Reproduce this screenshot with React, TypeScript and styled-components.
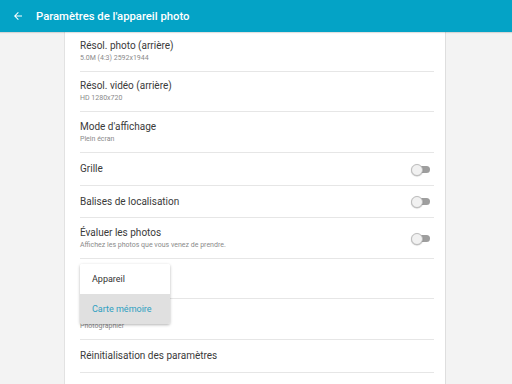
import React from "react";
import styled, { createGlobalStyle } from "styled-components";

const GlobalStyle = createGlobalStyle`
  html, body {
    margin: 0;
    padding: 0;
    background: #f3f3f3;
    font-family: Roboto, "Noto Sans", sans-serif;
  }
`;

const Page = styled.div`
  width: 512px;
  height: 384px;
  display: flex;
  flex-direction: column;
  overflow: hidden;
`;

const TopBar = styled.div`
  height: 32px;
  flex: none;
  background: #04a3c6;
  display: flex;
  align-items: center;
  color: #fff;
  box-shadow: 0 1px 1px rgba(0, 0, 0, 0.12);
  position: relative;
  z-index: 1;
`;

const BackButton = styled.div`
  width: 36px;
  display: flex;
  justify-content: center;
  align-items: center;
`;

const Title = styled.div`
  font-size: 11.3px;
  font-weight: 500;
`;

const Body = styled.div`
  flex: 1;
  display: flex;
`;

const Side = styled.div`
  width: 64px;
  flex: none;
`;

const Column = styled.div`
  width: 382px;
  flex: none;
  background: #fff;
  border-left: 1px solid #e2e2e2;
  border-right: 1px solid #dedede;
  padding: 0 11px 0 15px;
  box-sizing: border-box;
  position: relative;
`;

const Row = styled.div<{ h: number }>`
  height: ${(p) => p.h}px;
  box-sizing: border-box;
  border-bottom: 1px solid #e6e6e6;
  display: flex;
  align-items: center;
  justify-content: space-between;
  padding-right: 4px;
`;

const Texts = styled.div`
  display: flex;
  flex-direction: column;
  gap: 2px;
`;

const Label = styled.div`
  font-size: 10px;
  color: #3a3a3a;
  line-height: 12px;
  min-height: 12px;
`;

const Sub = styled.div`
  font-size: 7px;
  color: #8a8a8a;
  line-height: 9px;
`;

const Track = styled.div`
  width: 19px;
  height: 11px;
  position: relative;
  display: flex;
  align-items: center;
`;

const TrackBar = styled.div`
  margin-left: 3px;
  width: 16px;
  height: 7px;
  border-radius: 4px;
  background: #9e9e9e;
`;

const Thumb = styled.div`
  position: absolute;
  left: 0;
  top: 0;
  width: 10px;
  height: 10px;
  border-radius: 50%;
  background: #f1f1f1;
  border: 0.5px solid #bdbdbd;
  box-shadow: 0 0.5px 1px rgba(0, 0, 0, 0.25);
`;

const Menu = styled.div`
  position: absolute;
  left: 15px;
  top: 232px;
  width: 90px;
  background: #fff;
  box-shadow: 0 1px 3px rgba(0, 0, 0, 0.3);
  border-radius: 2px;
  overflow: hidden;
`;

const MenuItem = styled.div<{ active?: boolean }>`
  height: 30px;
  display: flex;
  align-items: center;
  padding-left: 12px;
  font-size: 9px;
  color: ${(p) => (p.active ? "#2e9fc0" : "#333")};
  background: ${(p) => (p.active ? "#e0e0e0" : "#fff")};
`;

const Switch = () => (
  <Track>
    <TrackBar />
    <Thumb />
  </Track>
);

type Item = { title: string; sub?: string; h: number; toggle?: boolean };

// rows 7 and 8 have their titles hidden behind the open menu
const items: Item[] = [
  { title: "Résol. photo (arrière)", sub: "5.0M (4:3) 2592x1944", h: 40 },
  { title: "Résol. vidéo (arrière)", sub: "HD 1280x720", h: 40 },
  { title: "Mode d'affichage", sub: "Plein écran", h: 41 },
  { title: "Grille", h: 33, toggle: true },
  { title: "Balises de localisation", h: 32, toggle: true },
  {
    title: "Évaluer les photos",
    sub: "Affichez les photos que vous venez de prendre.",
    h: 41,
    toggle: true,
  },
  { title: "", h: 40 },
  { title: "", sub: "Photographier", h: 41 },
  { title: "Réinitialisation des paramètres", h: 33 },
];

export default function App() {
  return (
    <Page>
      <GlobalStyle />
      <TopBar>
        <BackButton>
          <svg width="12" height="12" viewBox="0 0 24 24">
            <path
              d="M20 11H7.83l5.59-5.59L12 4l-8 8 8 8 1.41-1.41L7.83 13H20v-2z"
              fill="#fff"
            />
          </svg>
        </BackButton>
        <Title>Paramètres de l'appareil photo</Title>
      </TopBar>
      <Body>
        <Side />
        <Column>
          {items.map((it, i) => (
            <Row key={i} h={it.h}>
              <Texts>
                <Label>{it.title}</Label>
                {it.sub && <Sub>{it.sub}</Sub>}
              </Texts>
              {it.toggle && <Switch />}
            </Row>
          ))}
          <Menu>
            <MenuItem>Appareil</MenuItem>
            <MenuItem active>Carte mémoire</MenuItem>
          </Menu>
        </Column>
      </Body>
    </Page>
  );
}
